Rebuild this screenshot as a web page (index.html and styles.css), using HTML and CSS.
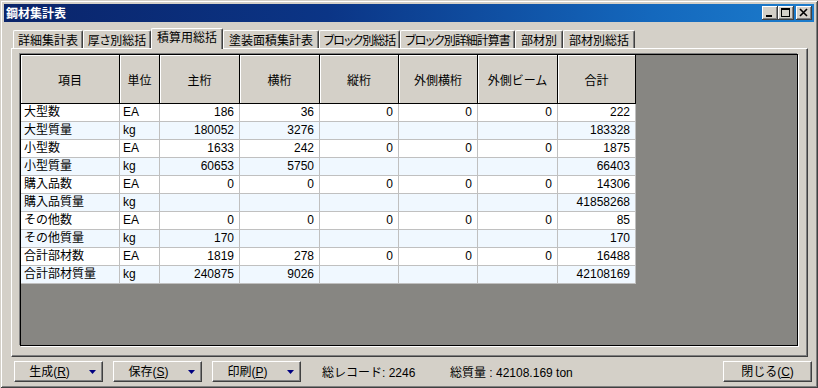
FILE: index.html
```html
<!DOCTYPE html>
<html>
  <head>
    <meta charset="utf-8">
    <title>鋼材集計表</title>
    <link rel="stylesheet" href="styles.css">
  </head>
  <body>
    <div class="window">

      <div class="titlebar">
        <span class="title">鋼材集計表</span>
        <div class="caption-buttons">
          <button class="cap"><svg width="16" height="14" viewBox="0 0 16 14"><rect x="4" y="9" width="6" height="2" fill="#000"/></svg></button>
          <button class="cap"><svg width="16" height="14" viewBox="0 0 16 14"><rect x="3.5" y="2.5" width="8" height="8" fill="none" stroke="#000"/><rect x="3" y="2" width="9" height="2" fill="#000"/></svg></button>
          <button class="cap cap-close"><svg width="16" height="14" viewBox="0 0 16 14"><path d="M4 3l7 7M11 3l-7 7" stroke="#000" stroke-width="1.6"/></svg></button>
        </div>
      </div>

      <div class="content">
        <div class="tabs">
          <div class="tab">詳細集計表</div>
          <div class="tab">厚さ別総括</div>
          <div class="tab active">積算用総括</div>
          <div class="tab">塗装面積集計表</div>
          <div class="tab tab-narrow">ブロック別総括</div>
          <div class="tab tab-narrow">ブロック別詳細計算書</div>
          <div class="tab">部材別</div>
          <div class="tab">部材別総括</div>
        </div>

        <div class="panel">
          <div class="grid">
            <div class="sheet">
              <div class="row">
                <div class="hd">項目</div>
                <div class="hd">単位</div>
                <div class="hd">主桁</div>
                <div class="hd">横桁</div>
                <div class="hd">縦桁</div>
                <div class="hd">外側横桁</div>
                <div class="hd">外側ビーム</div>
                <div class="hd">合計</div>
              </div>
              <div class="row data">
                <div class="cell">大型数</div><div class="cell">EA</div>
                <div class="cell num">186</div><div class="cell num">36</div><div class="cell num">0</div>
                <div class="cell num">0</div><div class="cell num">0</div><div class="cell num">222</div>
              </div>
              <div class="row data">
                <div class="cell">大型質量</div><div class="cell">kg</div>
                <div class="cell num">180052</div><div class="cell num">3276</div><div class="cell num"></div>
                <div class="cell num"></div><div class="cell num"></div><div class="cell num">183328</div>
              </div>
              <div class="row data">
                <div class="cell">小型数</div><div class="cell">EA</div>
                <div class="cell num">1633</div><div class="cell num">242</div><div class="cell num">0</div>
                <div class="cell num">0</div><div class="cell num">0</div><div class="cell num">1875</div>
              </div>
              <div class="row data">
                <div class="cell">小型質量</div><div class="cell">kg</div>
                <div class="cell num">60653</div><div class="cell num">5750</div><div class="cell num"></div>
                <div class="cell num"></div><div class="cell num"></div><div class="cell num">66403</div>
              </div>
              <div class="row data">
                <div class="cell">購入品数</div><div class="cell">EA</div>
                <div class="cell num">0</div><div class="cell num">0</div><div class="cell num">0</div>
                <div class="cell num">0</div><div class="cell num">0</div><div class="cell num">14306</div>
              </div>
              <div class="row data">
                <div class="cell">購入品質量</div><div class="cell">kg</div>
                <div class="cell num"></div><div class="cell num"></div><div class="cell num"></div>
                <div class="cell num"></div><div class="cell num"></div><div class="cell num">41858268</div>
              </div>
              <div class="row data">
                <div class="cell">その他数</div><div class="cell">EA</div>
                <div class="cell num">0</div><div class="cell num">0</div><div class="cell num">0</div>
                <div class="cell num">0</div><div class="cell num">0</div><div class="cell num">85</div>
              </div>
              <div class="row data">
                <div class="cell">その他質量</div><div class="cell">kg</div>
                <div class="cell num">170</div><div class="cell num"></div><div class="cell num"></div>
                <div class="cell num"></div><div class="cell num"></div><div class="cell num">170</div>
              </div>
              <div class="row data">
                <div class="cell">合計部材数</div><div class="cell">EA</div>
                <div class="cell num">1819</div><div class="cell num">278</div><div class="cell num">0</div>
                <div class="cell num">0</div><div class="cell num">0</div><div class="cell num">16488</div>
              </div>
              <div class="row data">
                <div class="cell">合計部材質量</div><div class="cell">kg</div>
                <div class="cell num">240875</div><div class="cell num">9026</div><div class="cell num"></div>
                <div class="cell num"></div><div class="cell num"></div><div class="cell num">42108169</div>
              </div>
            </div>
          </div>
        </div>
      </div>

      <div class="footer">
        <button class="btn"><span class="label">生成(<u>R</u>)</span><span class="arrow"><svg width="7" height="4" viewBox="0 0 7 4"><path d="M0 0h7L3.5 4z" fill="#000080"/></svg></span></button>
        <button class="btn"><span class="label">保存(<u>S</u>)</span><span class="arrow"><svg width="7" height="4" viewBox="0 0 7 4"><path d="M0 0h7L3.5 4z" fill="#000080"/></svg></span></button>
        <button class="btn"><span class="label">印刷(<u>P</u>)</span><span class="arrow"><svg width="7" height="4" viewBox="0 0 7 4"><path d="M0 0h7L3.5 4z" fill="#000080"/></svg></span></button>
        <span class="status">総レコード: 2246</span>
        <span class="status">総質量 : 42108.169 ton</span>
        <button class="btn btn-close"><span class="label">閉じる(<u>C</u>)</span></button>
      </div>

    </div>
  </body>
</html>
```

FILE: styles.css
```css
/* General */

* {
  box-sizing: border-box;
}

html, body {
  margin: 0;
}

body {
  font-family: "Liberation Sans", "Noto Sans CJK JP", sans-serif;
  font-size: 12px;
  color: #000;
  background-color: #d4d0c8;
}

/* Window frame */

.window {
  width: 818px;
  height: 388px;
  padding: 4px;
  display: flex;
  flex-direction: column;
  background-color: #d4d0c8;
  box-shadow: inset 1px 1px #d4d0c8, inset -1px -1px #404040,
              inset 2px 2px #fff, inset -2px -2px #808080;
}

.titlebar {
  height: 18px;
  display: flex;
  align-items: center;
  padding: 0 2px;
  background: linear-gradient(to right, #0a246a 0%, #0b3586 40%, #1468bd 80%, #1c7ccc 100%);
  color: #fff;
}

.title {
  flex: 1;
  font-family: "Noto Sans CJK JP", sans-serif;
  font-weight: bold;
  line-height: 18px;
}

.caption-buttons {
  display: flex;
}

.cap {
  width: 16px;
  height: 14px;
  padding: 0;
  border: 0;
  display: block;
  background-color: #d4d0c8;
  box-shadow: inset -1px -1px #404040, inset 1px 1px #fff, inset -2px -2px #808080;
}

.cap svg {
  display: block;
}

.cap-close {
  margin-left: 2px;
}

/* Tabs */

.content {
  display: flex;
  flex-direction: column;
  padding: 6px 6px 0 7px;
}

.tabs {
  height: 20px;
  display: flex;
  align-items: flex-end;
  padding-left: 2px;
  position: relative;
  z-index: 1;
}

.tab {
  height: 18px;
  line-height: 17px;
  text-align: center;
  white-space: nowrap;
  overflow: hidden;
  font-family: "Noto Sans CJK JP", sans-serif;
  font-feature-settings: "palt";
  background-color: #d4d0c8;
  border-top: 1px solid #fff;
  border-left: 1px solid #fff;
  border-right: 1px solid #404040;
  border-radius: 2px 2px 0 0;
  box-shadow: inset -1px 0 #808080;
}

.tab-narrow {
  letter-spacing: -1px;
}

.tab.active {
  height: 21px;
  line-height: 16px;
  margin-bottom: -1px;
}

.tab:nth-child(1) { width: 70px; }
.tab:nth-child(2) { width: 68px; }
.tab:nth-child(3) { width: 72px; }
.tab:nth-child(4) { width: 96px; }
.tab:nth-child(5) { width: 81px; }
.tab:nth-child(6) { width: 115px; }
.tab:nth-child(7) { width: 48px; }
.tab:nth-child(8) { width: 72px; }

/* Tab page */

.panel {
  height: 309px;
  padding: 4px 8px 9px 7px;
  border-top: 1px solid #fff;
  border-left: 1px solid #fff;
  border-right: 1px solid #404040;
  border-bottom: 1px solid #404040;
  box-shadow: inset -1px -1px #808080;
}

.grid {
  margin: 1px;
  height: 292px;
  border: 1px solid #000;
  background-color: #878682;
  box-shadow: -1px -1px #808080, 1px 1px #fff;
}

.sheet {
  width: 615px;
}

.row {
  display: grid;
  grid-template-columns: 99px 40px 80px 80px 79px 79px 80px 78px;
}

.hd {
  height: 49px;
  display: flex;
  align-items: center;
  justify-content: center;
  font-family: "Noto Sans CJK JP", sans-serif;
  background-color: #d4d0c8;
  border-right: 1px solid #000;
  border-bottom: 1px solid #000;
  box-shadow: inset 1px 1px #fff;
}

.cell {
  height: 18px;
  line-height: 17px;
  padding: 0 3px;
  white-space: nowrap;
  overflow: hidden;
  background-color: #fff;
  border-right: 1px solid #c0c0c0;
  border-bottom: 1px solid #c0c0c0;
}

.row.data:nth-child(odd) .cell {
  background-color: #f0f8ff;
}

.num {
  text-align: right;
  padding-right: 5px;
}

/* Bottom bar */

.footer {
  height: 21px;
  margin-top: 4px;
  display: flex;
  align-items: center;
  padding: 0 2px 0 10px;
}

.btn {
  width: 89px;
  height: 21px;
  padding: 0;
  display: flex;
  align-items: center;
  font: inherit;
  color: #000;
  background-color: #d4d0c8;
  border: 1px solid;
  border-color: #fff #404040 #404040 #fff;
  box-shadow: inset -1px -1px #808080;
}

.btn + .btn {
  margin-left: 10px;
}

.btn .label {
  flex: 1;
  text-align: center;
  line-height: 18px;
}

.btn .arrow {
  width: 18px;
  display: flex;
  justify-content: center;
  padding-right: 1px;
}

.btn .arrow svg {
  display: block;
}

.status {
  width: 128px;
  white-space: nowrap;
}

.btn + .status {
  margin-left: 21px;
}

.btn-close {
  margin-left: auto;
}
```
